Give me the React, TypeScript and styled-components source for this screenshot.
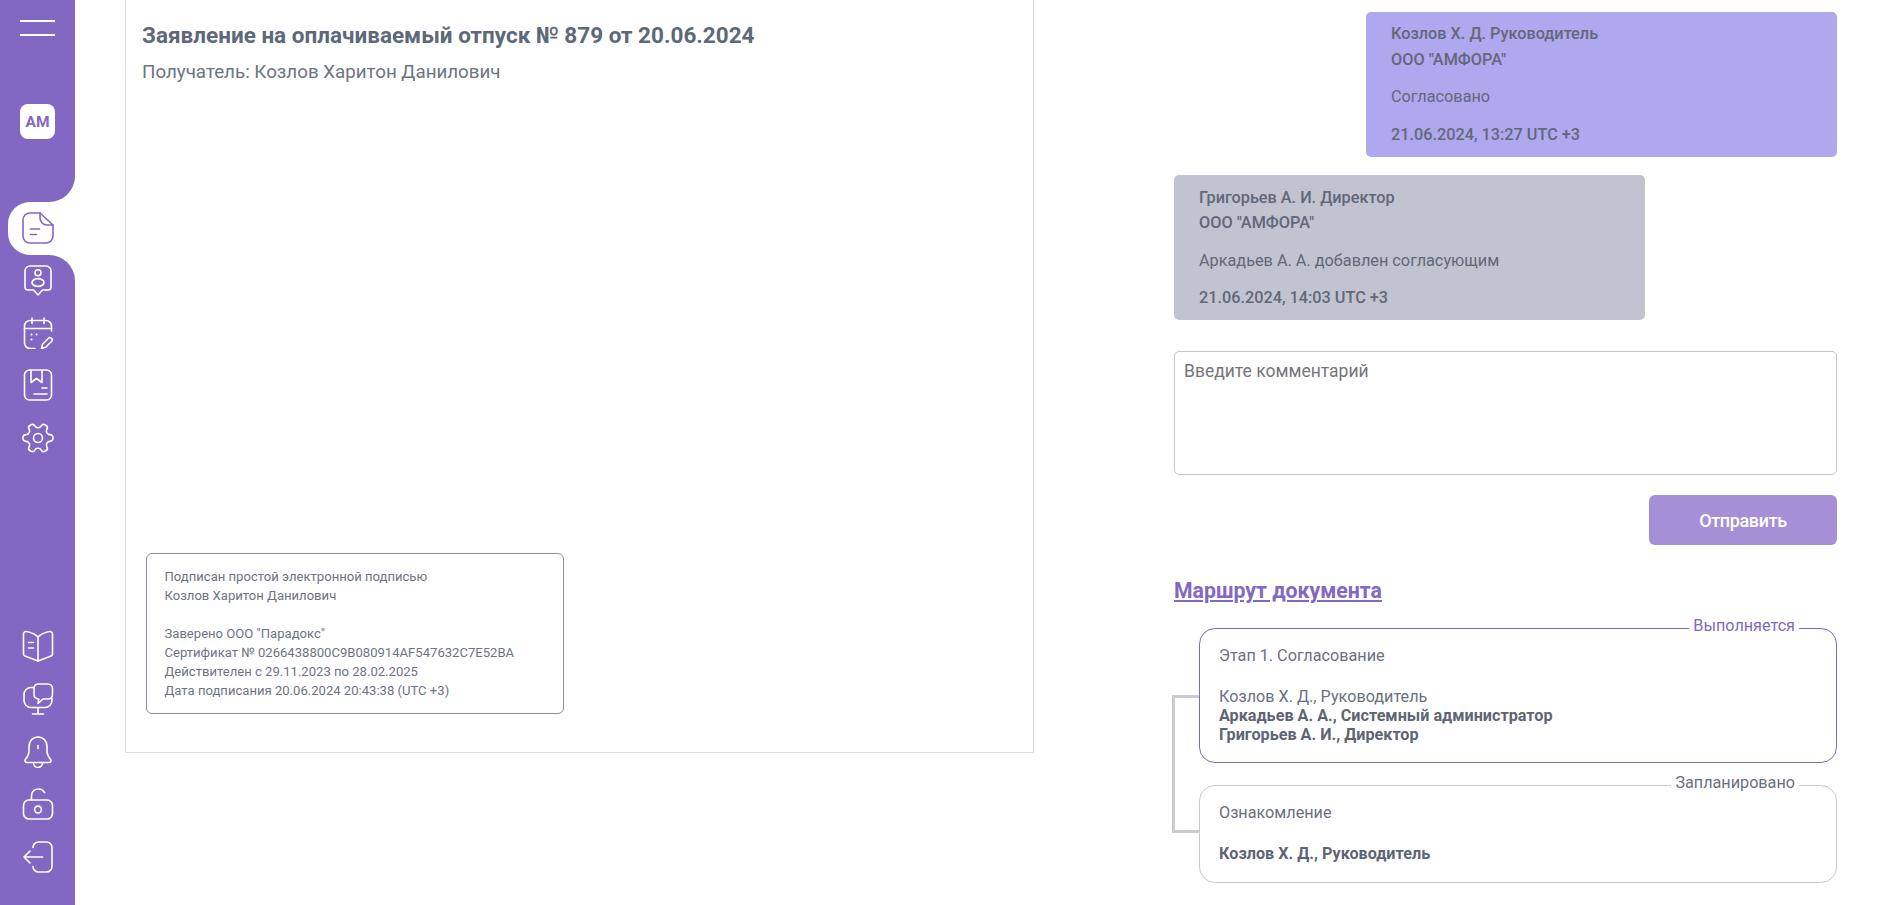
import React from "react";
import styled, { createGlobalStyle } from "styled-components";

const Global = createGlobalStyle`
  html, body { margin: 0; padding: 0; background: #fff; overflow: hidden; }
  * { box-sizing: border-box; }
  body { font-family: Roboto, "Noto Sans", sans-serif; }
`;

const purple = "#8268c2";

const Page = styled.div`
  display: flex;
  width: 1899px;
  height: 905px;
  overflow: hidden;
`;
const Sidebar = styled.nav`
  width: 75px;
  height: 905px;
  flex: none;
  display: flex;
  flex-direction: column;
  background: #fff;
`;
const SideTop = styled.div`
  height: 202px;
  background: ${purple};
  border-bottom-right-radius: 26px;
  padding: 20px 0 0 20px;
`;
const Burger = styled.div`
  width: 35px;
  height: 16px;
  border-top: 2px solid #fff;
  border-bottom: 2px solid #fff;
`;
const Avatar = styled.div`
  margin-top: 68px;
  width: 35px;
  height: 35px;
  border-radius: 8px;
  background: #fff;
  color: ${purple};
  font-size: 15.5px;
  font-weight: 700;
  display: flex;
  align-items: center;
  justify-content: center;
`;
const ActiveRow = styled.div`
  height: 53px;
  background: ${purple};
  padding-left: 8px;
`;
const ActiveTab = styled.div`
  height: 53px;
  background: #fff;
  border-radius: 22px 0 0 22px;
  padding: 0 0 2px 14px;
  display: flex;
  align-items: center;
`;
const SideBottom = styled.div`
  flex: 1;
  background: ${purple};
  border-top-right-radius: 26px;
  display: flex;
  flex-direction: column;
  justify-content: space-between;
  padding-bottom: 22px;
`;
const IconGroup = styled.div<{ $top?: boolean }>`
  display: flex;
  flex-direction: column;
  margin-top: ${(p) => (p.$top ? "-1px" : "0")};
`;
const IconRow = styled.div`
  height: 52.6px;
  display: flex;
  align-items: center;
  justify-content: center;
`;
const Ico = styled.svg`
  width: 32px;
  height: 32px;
  fill: none;
  stroke: currentColor;
  stroke-width: 1.6;
  stroke-linecap: round;
  stroke-linejoin: round;
  color: ${(p) => p.color || "#fff"};
  flex: none;
`;

const Main = styled.main`
  flex: 1;
  display: flex;
  align-items: flex-start;
`;
const Doc = styled.section`
  margin-left: 50px;
  width: 909px;
  height: 753px;
  border: 1px solid #dcdde1;
  border-top: none;
  padding: 0 20px 38px 20px;
  display: flex;
  flex-direction: column;
`;
const Title = styled.h1`
  margin: 21px 0 0 -4px;
  font-size: 22.5px;
  line-height: 28px;
  font-weight: 700;
  color: #5d6879;
`;
const Recipient = styled.p`
  margin: 11px 0 0 -4px;
  font-size: 18.75px;
  line-height: 24px;
  color: #6d7482;
`;
const Stamp = styled.div`
  margin-top: auto;
  width: 418px;
  height: 161px;
  border: 1px solid #8b8e9c;
  border-radius: 6px;
  padding: 13px 17.5px;
  font-size: 13.08px;
  line-height: 19px;
  color: #6e7383;
`;
const StampGap = styled.div`
  height: 19px;
`;
const Side = styled.aside`
  margin-left: 140px;
  width: 663px;
  padding-top: 12px;
  display: flex;
  flex-direction: column;
`;
const Bubble = styled.div<{ $own?: boolean }>`
  width: 471px;
  height: 145px;
  margin-bottom: 18px;
  align-self: ${(p) => (p.$own ? "flex-end" : "flex-start")};
  background: ${(p) => (p.$own ? "#b0a8ee" : "#c1c3d0")};
  border-radius: 5px;
  padding: ${(p) => (p.$own ? "9px" : "9.5px")} 25px;
  color: #626779;
  font-size: 16.25px;
`;
const BubbleStrong = styled.div`
  font-weight: 500;
  line-height: 25.5px;
`;
const BubbleText = styled.div`
  margin-top: 12px;
  line-height: 25px;
`;
const BubbleDate = styled(BubbleStrong)`
  margin-top: 12.5px;
`;
const Comment = styled.div`
  margin-top: 13px;
  height: 124px;
  border: 1px solid #c6c6c8;
  border-radius: 5px;
  padding: 8px 9px;
  font-size: 17.5px;
  line-height: 22px;
  color: #75757a;
`;
const SendRow = styled.div`
  display: flex;
  justify-content: flex-end;
  margin-top: 20px;
`;
const Send = styled.button`
  width: 188px;
  height: 50px;
  border: none;
  border-radius: 6px;
  background: #a58fd6;
  color: #fff;
  font-family: inherit;
  font-size: 18px;
  font-weight: 500;
  letter-spacing: -0.35px;
`;
const RouteTitle = styled.a`
  display: block;
  margin-top: 33px;
  font-size: 21.25px;
  line-height: 26px;
  font-weight: 700;
  color: ${purple};
  text-decoration: underline;
`;
const Route = styled.div`
  position: relative;
  margin-top: 24px;
  padding-left: 25px;
  display: flex;
  flex-direction: column;
  gap: 22px;
`;
const Connector = styled.div`
  position: absolute;
  left: -2px;
  top: 67px;
  width: 27px;
  height: 138px;
  border: 3px solid #cacbd3;
  border-right: none;
`;
const Stage = styled.div<{ $active?: boolean; $h: number }>`
  position: relative;
  height: ${(p) => p.$h}px;
  background: #fff;
  border: 1px solid ${(p) => (p.$active ? "#7f69b9" : "#c9c9cb")};
  border-radius: 16px;
  padding: 17px 19px 0;
  font-size: 16.2px;
  line-height: 19px;
  color: #6b7080;
`;
const StageState = styled.span<{ $active?: boolean }>`
  position: absolute;
  top: -13px;
  right: 37px;
  background: #fff;
  padding: 0 4px;
  font-size: 16.2px;
  line-height: 20px;
  color: ${(p) => (p.$active ? "#8268c2" : "#6b7080")};
`;
const StageSpacer = styled.div<{ $h: number }>`
  height: ${(p) => p.$h}px;
`;
const Strong = styled.div`
  font-weight: 700;
  color: #5f6475;
`;

const I = {
  doc: (
    <>
      <path d="M18 1H8a7 7 0 0 0-7 7v16a7 7 0 0 0 7 7h16a7 7 0 0 0 7-7V13z" />
      <path d="M18 1v5a7 7 0 0 0 7 7h6" />
      <path d="M8.5 17h9M8.5 22.5h6" />
    </>
  ),
  person: (
    <>
      <path d="M8 2h16a5 5 0 0 1 5 5v16a3 3 0 0 1-3 3h-5.5L16 31l-4.5-5H6a3 3 0 0 1-3-3V7a5 5 0 0 1 5-5z" />
      <circle cx="16" cy="8.700" r="3" />
      <ellipse cx="16" cy="18.500" rx="6" ry="3.900" />
    </>
  ),
  calendar: (
    <>
      <path d="M10 1v5.500M22 1v5.500" />
      <path d="M13 31.500H8a5.500 5.500 0 0 1-5.500-5.500V9A5.500 5.500 0 0 1 8 3.500h16A5.500 5.500 0 0 1 29.500 9v5" />
      <path d="M2.500 11.500h27" />
      <path d="M9.500 17.500h.01M14.500 17.500h.01M9.500 22.500h.01" strokeWidth="2" />
      <path d="M19.500 31.500l1-4.200 6-6a2.200 2.200 0 0 1 3.200 3l-6 6z" />
    </>
  ),
  box: (
    <>
      <rect x="2.500" y="1" width="27" height="30" rx="5" />
      <path d="M9 1.500v12l5.500-4 5.500 4v-12" />
      <path d="M20 19h5M12 25h13" />
    </>
  ),
  gear: (
    <g transform="translate(16 16) rotate(90) scale(1.5) translate(-12 -12)" strokeWidth="1.07">
      <path d="M12.220 2h-.44a2 2 0 0 0-2 2v.18a2 2 0 0 1-1 1.730l-.43.250a2 2 0 0 1-2 0l-.15-.08a2 2 0 0 0-2.730.730l-.22.380a2 2 0 0 0 .73 2.730l.15.100a2 2 0 0 1 1 1.720v.510a2 2 0 0 1-1 1.740l-.15.090a2 2 0 0 0-.73 2.730l.22.380a2 2 0 0 0 2.730.730l.15-.08a2 2 0 0 1 2 0l.43.250a2 2 0 0 1 1 1.730V20a2 2 0 0 0 2 2h.44a2 2 0 0 0 2-2v-.18a2 2 0 0 1 1-1.730l.43-.25a2 2 0 0 1 2 0l.15.080a2 2 0 0 0 2.730-.730l.22-.39a2 2 0 0 0-.73-2.730l-.15-.08a2 2 0 0 1-1-1.740v-.5a2 2 0 0 1 1-1.740l.15-.09a2 2 0 0 0 .73-2.730l-.22-.38a2 2 0 0 0-2.730-.73l-.15.080a2 2 0 0 1-2 0l-.43-.25a2 2 0 0 1-1-1.730V4a2 2 0 0 0-2-2z" />
      <circle cx="12" cy="12" r="3" />
    </g>
  ),
  book: (
    <>
      <path d="M16 7v24" />
      <path d="M16 7c-3-3.200-7-4.700-11.500-5.500C2.800 1.200 1.500 2.400 1.500 4v19.800c0 1 .6 1.900 1.500 2.200L16 31l13-5c.9-.3 1.500-1.200 1.500-2.200V4c0-1.600-1.300-2.800-3-2.500C23 2.300 19 3.800 16 7z" />
      <path d="M6.500 12.500h5M6.500 18h5" />
    </>
  ),
  monitor: (
    <>
      <path d="M12 4.500H9A7 7 0 0 0 2 11.500v6A7 7 0 0 0 9 24.500h14a7 7 0 0 0 7-7v-2" />
      <path d="M16 24.500v6.500M10.500 31h11" />
      <path d="M16 1h10a4.500 4.500 0 0 1 4.500 4.500v6A4.500 4.500 0 0 1 26 16h-5l-5 4.500.7-4.500A4.500 4.500 0 0 1 12 11.500v-6A4.500 4.500 0 0 1 16 1z" />
    </>
  ),
  bell: (
    <>
      <path d="M16 1c-5.500 0-9 4.300-9 9.800v4.700c0 3-1.200 5-3.500 7.800-1.200 1.400-.4 3.200 1.400 3.200h22.200c1.800 0 2.600-1.800 1.400-3.200C26.200 20.500 25 18.500 25 15.500v-4.700C25 5.300 21.500 1 16 1z" />
      <path d="M11.500 27a4.500 4.500 0 0 0 9 0" />
      <path d="M16 9.500v3" />
    </>
  ),
  lock: (
    <>
      <rect x="1.500" y="12" width="29" height="19" rx="5.500" />
      <path d="M9.500 12V8a7 7 0 0 1 13-3.500" />
      <circle cx="16" cy="21.500" r="3.400" />
    </>
  ),
  logout: (
    <>
      <path d="M11 6.500A5.500 5.500 0 0 1 16.500 1h8a5.500 5.500 0 0 1 5.500 5.500v19a5.500 5.500 0 0 1-5.500 5.500h-8a5.500 5.500 0 0 1-5.500-5.500" />
      <path d="M20.500 16H2M8 10l-6 6 6 6" />
    </>
  ),
};

const Icon = ({ k, color }: { k: keyof typeof I; color?: string }) => (
  <Ico viewBox="0 0 32 32" color={color}>
    {I[k]}
  </Ico>
);

export default function App() {
  return (
    <Page>
      <Global />
      <Sidebar>
        <SideTop>
          <Burger />
          <Avatar>АМ</Avatar>
        </SideTop>
        <ActiveRow>
          <ActiveTab>
            <Icon k="doc" color={purple} />
          </ActiveTab>
        </ActiveRow>
        <SideBottom>
          <IconGroup $top>
            {(["person", "calendar", "box", "gear"] as const).map((k) => (
              <IconRow key={k}>
                <Icon k={k} />
              </IconRow>
            ))}
          </IconGroup>
          <IconGroup>
            {(["book", "monitor", "bell", "lock", "logout"] as const).map((k) => (
              <IconRow key={k}>
                <Icon k={k} />
              </IconRow>
            ))}
          </IconGroup>
        </SideBottom>
      </Sidebar>
      <Main>
        <Doc>
          <Title>Заявление на оплачиваемый отпуск № 879 от 20.06.2024</Title>
          <Recipient>Получатель: Козлов Харитон Данилович</Recipient>
          <Stamp>
            <div>Подписан простой электронной подписью</div>
            <div>Козлов Харитон Данилович</div>
            <StampGap />
            <div>Заверено ООО "Парадокс"</div>
            <div>Сертификат № 0266438800C9B080914AF547632C7E52BA</div>
            <div>Действителен с 29.11.2023 по 28.02.2025</div>
            <div>Дата подписания 20.06.2024 20:43:38 (UTC +3)</div>
          </Stamp>
        </Doc>
        <Side>
          <Bubble $own>
            <BubbleStrong>Козлов Х. Д. Руководитель</BubbleStrong>
            <BubbleStrong>ООО "АМФОРА"</BubbleStrong>
            <BubbleText>Согласовано</BubbleText>
            <BubbleDate>21.06.2024, 13:27 UTC +3</BubbleDate>
          </Bubble>
          <Bubble>
            <BubbleStrong>Григорьев А. И. Директор</BubbleStrong>
            <BubbleStrong>ООО "АМФОРА"</BubbleStrong>
            <BubbleText>Аркадьев А. А. добавлен согласующим</BubbleText>
            <BubbleDate>21.06.2024, 14:03 UTC +3</BubbleDate>
          </Bubble>
          <Comment>Введите комментарий</Comment>
          <SendRow>
            <Send>Отправить</Send>
          </SendRow>
          <RouteTitle>Маршрут документа</RouteTitle>
          <Route>
            <Connector />
            <Stage $active $h={135}>
              <StageState $active>Выполняется</StageState>
              <div>Этап 1. Согласование</div>
              <StageSpacer $h={22} />
              <div>Козлов Х. Д., Руководитель</div>
              <Strong>Аркадьев А. А., Системный администратор</Strong>
              <Strong>Григорьев А. И., Директор</Strong>
            </Stage>
            <Stage $h={98}>
              <StageState>Запланировано</StageState>
              <div>Ознакомление</div>
              <StageSpacer $h={22} />
              <Strong>Козлов Х. Д., Руководитель</Strong>
            </Stage>
          </Route>
        </Side>
      </Main>
    </Page>
  );
}
